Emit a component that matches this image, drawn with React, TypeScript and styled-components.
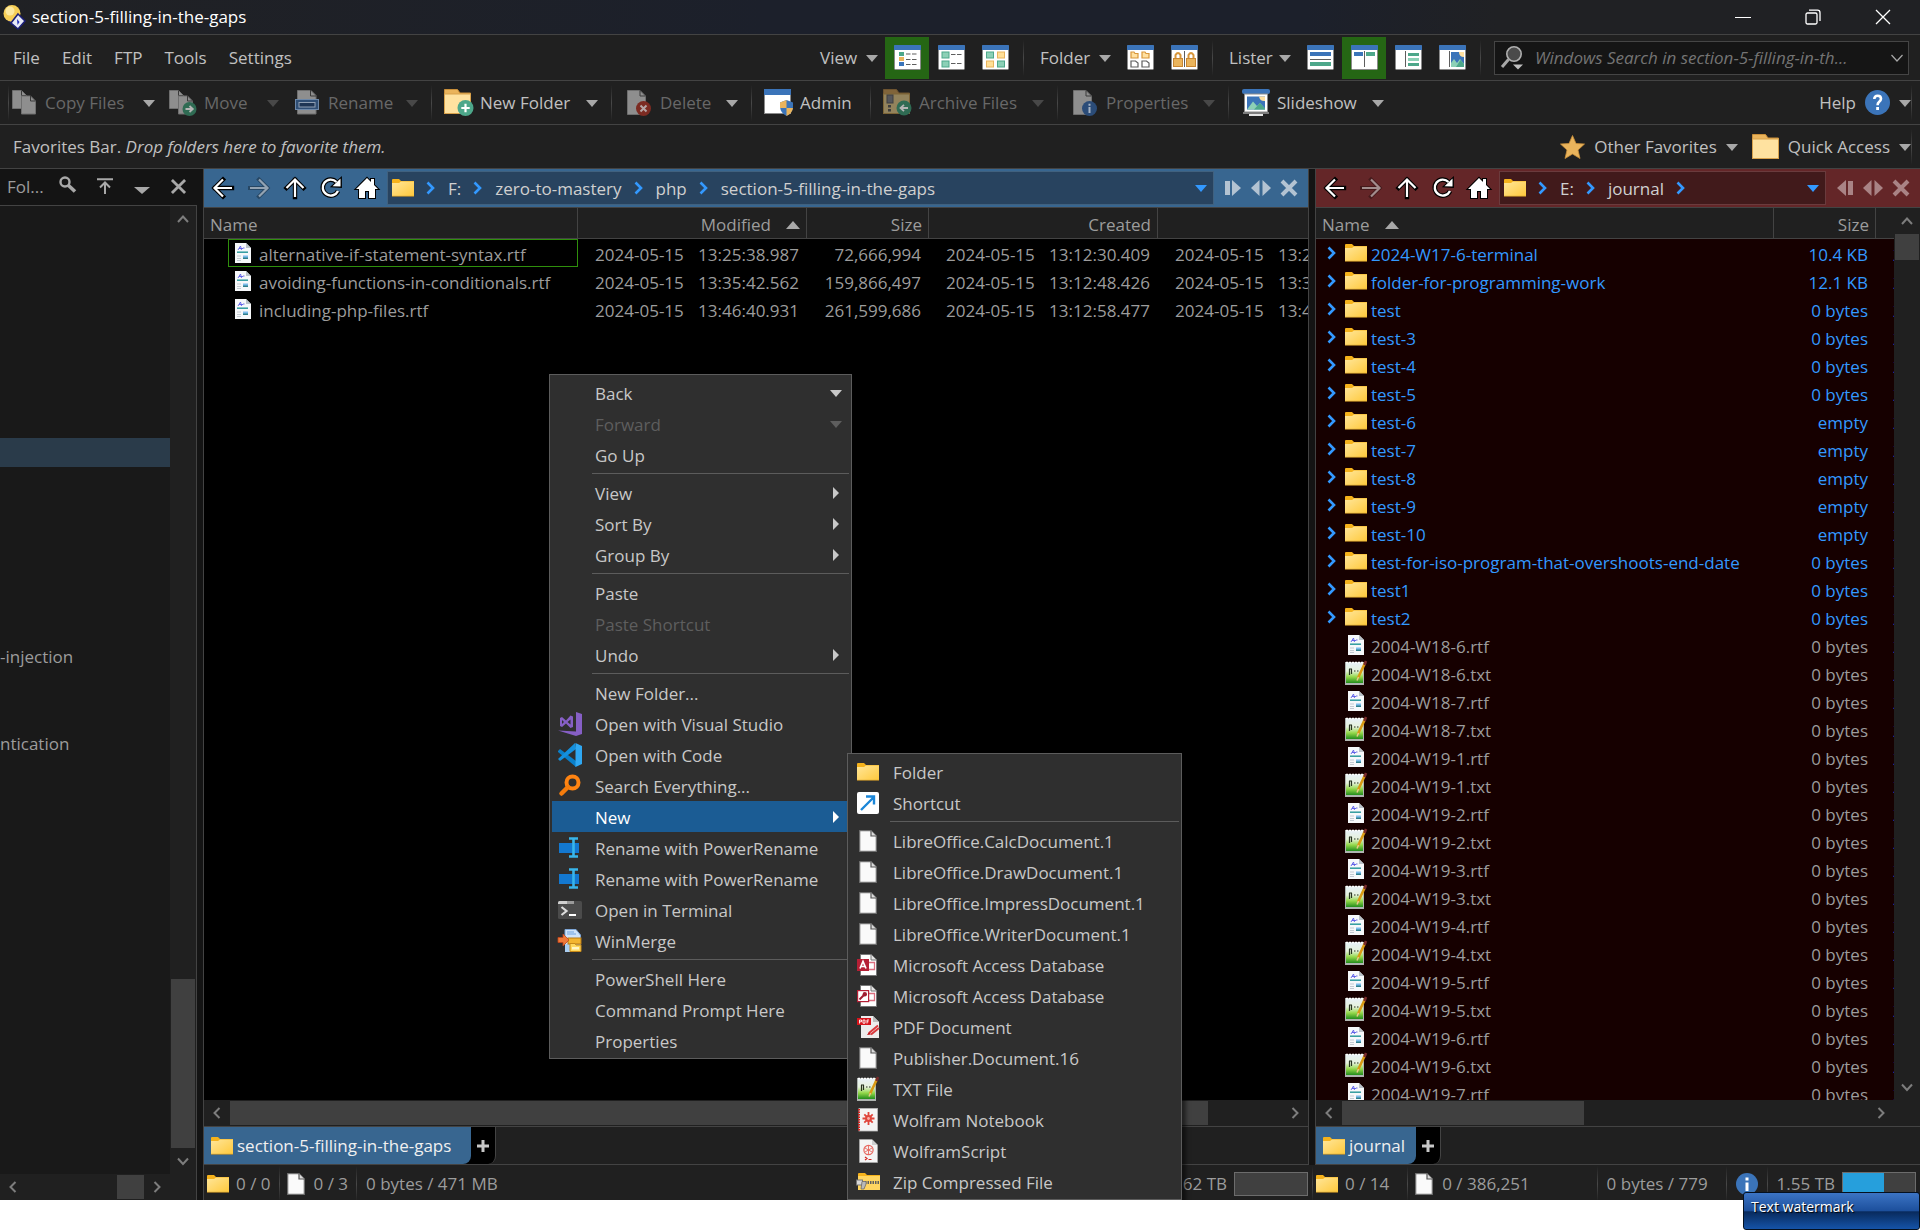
import React from "react";
import styled, { createGlobalStyle, css } from "styled-components";

/* ---------- theme values ---------- */

const c = {
  bar: "#202020",
  dark: "#141414",
  line: "#434343",
  text: "#c0c0c0",
  dim: "#9c9c9c",
  off: "#686868",
  thumb: "#404040",
  link: "#3399ff",
  green: "#256614",
  menu: "#2f2f2f",
};

const GlobalStyle = createGlobalStyle`
  *, *::before, *::after { box-sizing: border-box; }
  body {
    margin: 0;
    background: #ffffff;
    font-family: "Open Sans", "Noto Sans", "Liberation Sans", sans-serif;
    font-size: 17px;
    line-height: 24px;
    color: ${c.text};
  }
  button, input { font: inherit; color: inherit; background: none; border: 0; padding: 0; margin: 0; }
  button { display: inline-flex; align-items: center; white-space: nowrap; }
  svg { display: block; flex: none; overflow: visible; }
`;

/* ---------- drawings ---------- */

const Tri = ({ dir = "down", color = "#a8a8a8", w = 12 }: { dir?: "down" | "up" | "right"; color?: string; w?: number }) => {
  if (dir === "right")
    return (
      <svg width="12" height="12" viewBox="0 0 12 12">
        <path d="M3 0L9 6L3 12Z" fill={color} />
      </svg>
    );
  return (
    <svg width={w} height="8" viewBox="0 0 12 8" preserveAspectRatio="none">
      <path d={dir === "down" ? "M0 1H12L6 8Z" : "M0 8H12L6 0Z"} fill={color} />
    </svg>
  );
};

const Chevron = ({ dir, color = "#7d7d7d", s = 12 }: { dir: "up" | "down" | "left" | "right"; color?: string; s?: number }) => {
  const d = { up: "M1 9L6 3.500L11 9", down: "M1 3.500L6 9L11 3.500", left: "M8.500 1L3.500 6L8.500 11", right: "M3.500 1L8.500 6L3.500 11" }[dir];
  return (
    <svg width={s} height={s} viewBox="0 0 12 12">
      <path d={d} fill="none" stroke={color} strokeWidth="2" />
    </svg>
  );
};

const Crumb = () => (
  <svg width="10" height="12" viewBox="0 0 10 12">
    <path d="M1.500 0.500L7 6L1.500 11.500" fill="none" stroke={c.link} strokeWidth="2.600" />
  </svg>
);

const Folder = () => (
  <svg width="22" height="18" viewBox="0 0 22 18">
    <defs>
      <linearGradient id="folderFill" x1="0" y1="0" x2="1" y2="1">
        <stop offset="0" stopColor="#ffe69a" />
        <stop offset="1" stopColor="#ffc93c" />
      </linearGradient>
    </defs>
    <path d="M0 1Q0 0 1 0H7L9 2H22V6H0Z" fill="#f5b21b" />
    <path d="M0 4H7L9 2.500H22V17H0Z" fill="url(#folderFill)" />
    <path d="M0 17.300H22" stroke="#c9962a" strokeWidth="0.800" />
  </svg>
);

const BlankDoc = () => (
  <svg width="18" height="22" viewBox="0 0 18 22">
    <path d="M0.700 0.700H12L17.300 6V21.300H0.700Z" fill="#fafafa" stroke="#6f6f6f" strokeWidth="1.200" />
    <path d="M12 0.700V6H17.300" fill="#dcdcdc" stroke="#555" strokeWidth="1.200" />
  </svg>
);

const RtfDoc = () => (
  <svg width="16" height="20" viewBox="0 0 16 20">
    <path d="M0 0H11L16 5V20H0Z" fill="#f6f8fa" />
    <path d="M11 0V5H16Z" fill="#b9c1c8" />
    <path d="M3 7L5.500 3L6.500 7M4 5.500H8M8 5H9.500" stroke="#5a5ae6" strokeWidth="0.900" fill="none" />
    <path d="M2 9.200H13" stroke="#2f9a9d" strokeWidth="1.500" />
    <path d="M2 13H6M2 15.500H6M2 17.500H6" stroke="#c3cad2" strokeWidth="1.200" />
    <rect x="8" y="12.500" width="5" height="2.500" fill="#7cbcec" />
    <rect x="8" y="14.500" width="5" height="1.500" fill="#2e7f8b" />
  </svg>
);

const TxtDoc = () => (
  <svg width="22" height="24" viewBox="0 0 22 24">
    <defs>
      <linearGradient id="txtFill" x1="0" y1="0" x2="0" y2="1">
        <stop offset="0" stopColor="#e8f1f6" />
        <stop offset="0.400" stopColor="#e6f2dc" />
        <stop offset="0.700" stopColor="#93d84a" />
        <stop offset="1" stopColor="#228c1c" />
      </linearGradient>
    </defs>
    <rect x="0" y="1" width="19" height="23" fill="#aeb4b0" />
    <rect x="1" y="2" width="17" height="20" fill="url(#txtFill)" />
    <path d="M1 1.500H18" stroke="#fff" strokeWidth="1.500" strokeDasharray="2 1" />
    <path d="M4.500 8V14M6.500 8V13M4 8H7M9 10H10.500M12 10H13.500" stroke="#27331f" strokeWidth="1.200" />
    <path d="M20 2L13 17" stroke="#d99a14" strokeWidth="2.600" />
    <path d="M21 0L19.500 4" stroke="#7a2c2c" strokeWidth="2.600" />
    <path d="M13.500 16L12 19.500" stroke="#e8c98a" strokeWidth="1.500" />
  </svg>
);

const AppLogo = () => (
  <svg width="22" height="24" viewBox="0 0 22 24">
    <circle cx="9" cy="8.500" r="8.500" fill="#f7cf57" />
    <circle cx="7" cy="6" r="4.500" fill="#fde9a0" />
    <path d="M3 14Q7 19 12 16L9 20Z" fill="#1b1f6e" />
    <path d="M15 9L22 16L15 24L8 18Z" fill="#e8eaf6" stroke="#1c1f78" strokeWidth="1.500" />
    <path d="M14 14L16.500 17L14.500 20Z" fill="#2330b8" />
  </svg>
);

/* Window glyph shared by the view, folder and lister buttons */
const Win = ({ children }: { children: React.ReactNode }) => (
  <svg width="27" height="25" viewBox="0 0 27 25">
    <rect x="0.500" y="0.500" width="26" height="24" rx="1" fill="#fff" stroke="#8b8b8b" />
    <path d="M0 1Q0 0 1 0H26Q27 0 27 1V5H0Z" fill="#3b74b9" />
    {children}
  </svg>
);

const dash = (y: number, x = 12) => <path d={`M${x} ${y}H${x + 4.500}M${x + 6} ${y}H${x + 10.500}`} stroke="#5e5e5e" strokeWidth="1.200" />;

const IconDetails = () => (
  <Win>
    <rect x="5" y="7" width="5" height="4" fill="#4da78a" />
    <rect x="5" y="12" width="5" height="4" fill="#eab45c" />
    <rect x="5" y="17" width="5" height="4" fill="#3b74b9" />
    {dash(9)}{dash(14.500)}{dash(19.500)}
  </Win>
);
const IconTiles = () => (
  <Win>
    <rect x="4" y="7" width="7" height="6" fill="#8cd0b6" stroke="#4da78a" />
    <rect x="4" y="16" width="7" height="6" fill="#8cd0b6" stroke="#4da78a" />
    {dash(9.500, 13)}{dash(18.500, 13)}
  </Win>
);
const IconThumbs = () => (
  <Win>
    <rect x="4.500" y="7" width="7" height="6" fill="#8cd0b6" stroke="#4da78a" />
    <rect x="15.500" y="7" width="7" height="6" fill="#ffdf97" stroke="#eab45c" />
    <rect x="4.500" y="16" width="7" height="6" fill="#ffdf97" stroke="#eab45c" />
    <rect x="15.500" y="16" width="7" height="6" fill="#8cd0b6" stroke="#4da78a" />
  </Win>
);
const IconFolderOpts = () => (
  <Win>
    <path d="M4 7H7L8 8.500H11V13H4ZM15 7H18L19 8.500H22V13H15Z" fill="#ffe0a0" stroke="#d8963a" strokeWidth="1.200" />
    <path d="M4 16H8.500L11 18V22H4ZM15 16H19.500L22 18V22H15Z" fill="#fff" stroke="#5e5e5e" strokeWidth="1.200" />
  </Win>
);
const IconLocks = () => (
  <Win>
    <path d="M4.500 14V10Q7 6 9.500 10V14M17.500 14V10Q20 6 22.500 10V14" fill="none" stroke="#d8963a" strokeWidth="2" />
    <rect x="2.500" y="13.500" width="9" height="8" fill="#eab45c" stroke="#c98631" />
    <rect x="15.500" y="13.500" width="9" height="8" fill="#eab45c" stroke="#c98631" />
    <path d="M13.500 6V22" stroke="#5e5e5e" />
  </Win>
);
const IconHoriz = () => (
  <Win>
    <rect x="3" y="7" width="21" height="4" fill="#3b74b9" />
    <path d="M3 14.500H24" stroke="#5e5e5e" />
    <rect x="3" y="17" width="21" height="4" fill="#4da78a" />
  </Win>
);
const IconVert = () => (
  <Win>
    <rect x="3" y="7" width="9" height="4" fill="#3b74b9" />
    <rect x="15" y="7" width="9" height="4" fill="#4da78a" />
    <path d="M13.500 6V22" stroke="#5e5e5e" />
  </Win>
);
const IconTreeSide = () => (
  <Win>
    <path d="M10.500 6V22" stroke="#5e5e5e" />
    <rect x="13" y="8" width="11" height="3" fill="#4da78a" />
    <rect x="13" y="13" width="11" height="3" fill="#8cd0b6" />
    <rect x="13" y="18" width="11" height="3" fill="#4da78a" />
  </Win>
);
const IconViewer = () => (
  <Win>
    <path d="M10.500 6V22" stroke="#5e5e5e" />
    <rect x="12" y="7" width="13" height="15" fill="#3b74b9" />
    <path d="M20 7H25V12Q20 12 20 7Z" fill="#ffe0a0" />
    <path d="M12 22V18L15 14L18 18L21 14L25 19V22Z" fill="#8cd0b6" />
    <path d="M17 22L21.500 15L25 19V22Z" fill="#4da78a" />
  </Win>
);

const page = (x: number, y: number) => (
  <g>
    <path d={`M${x} ${y}h9l5 5v13h-14Z`} fill="#8e8e8e" stroke="#6f6f6f" />
    <path d={`M${x + 9} ${y}v5h5`} fill="none" stroke="#3a3a3a" />
  </g>
);
const IconCopy = () => (
  <svg width="24" height="25" viewBox="0 0 24 25">{page(0.500, 0.500)}{page(9.500, 6)}</svg>
);
const IconMove = () => (
  <svg width="28" height="26" viewBox="0 0 28 26">
    {page(0.500, 0.500)}{page(9.500, 6)}
    <circle cx="20.500" cy="19" r="7" fill="#2f6b53" />
    <path d="M16.500 19H23.500M20.500 16L23.800 19L20.500 22" stroke="#b5b5b5" strokeWidth="1.800" fill="none" />
  </svg>
);
const IconRename = () => (
  <svg width="24" height="25" viewBox="0 0 24 25">
    <path d="M2.500 0.500H16L21 5.500V24H2.500Z" fill="#8e8e8e" stroke="#6f6f6f" />
    <path d="M15.500 0V6H21" fill="none" stroke="#3a3a3a" />
    <rect x="0.500" y="9.500" width="23" height="10" fill="#2f4e74" stroke="#6c87a8" />
    <rect x="4" y="12.500" width="16" height="4.500" fill="#1e3554" stroke="#8f9fb3" />
  </svg>
);
const IconNewFolder = () => (
  <svg width="30" height="27" viewBox="0 0 30 27">
    <path d="M0.500 5V0.500H13.500L16 4H26.500V24.500H0.500Z" fill="#eab45c" stroke="#c98f3a" />
    <rect x="0.500" y="5" width="26" height="19.500" fill="#ffe2a0" stroke="#d8a24c" />
    <circle cx="21.500" cy="19" r="8" fill="#4da78a" />
    <path d="M21.500 14.800V23.200M17.300 19H25.700" stroke="#fff" strokeWidth="2.200" />
  </svg>
);
const IconDelete = () => (
  <svg width="24" height="26" viewBox="0 0 24 26">
    <path d="M0.500 0.500H13L18.500 6V24.500H0.500Z" fill="#8e8e8e" stroke="#6f6f6f" />
    <path d="M13 0.500V6H18.500" fill="none" stroke="#3a3a3a" />
    <circle cx="16.500" cy="18.500" r="7.500" fill="#7c2b22" />
    <path d="M13.500 15.500L19.500 21.500M19.500 15.500L13.500 21.500" stroke="#b5a5a5" strokeWidth="2" />
  </svg>
);
const IconAdmin = () => (
  <svg width="30" height="27" viewBox="0 0 30 27">
    <rect x="0.500" y="0.500" width="26" height="24" fill="#fff" stroke="#8b8b8b" />
    <rect width="27" height="6" fill="#3b74b9" />
    <path d="M22.500 11L29 13.500V18Q28.500 24 22.500 27Q16.500 24 16 18V13.500Z" fill="#3b74b9" />
    <path d="M22.500 11V19H16V13.500ZM22.500 19H29Q28.500 24 22.500 27Z" fill="#eab45c" />
  </svg>
);
const IconArchive = () => (
  <svg width="30" height="27" viewBox="0 0 30 27">
    <path d="M0.500 5V0.500H13.500L16 4H26.500V24.500H0.500Z" fill="#80643a" stroke="#6e5430" />
    <rect x="0.500" y="5" width="26" height="19.500" fill="#93835c" stroke="#7d6537" />
    <rect x="4" y="6" width="6" height="8" fill="#55565a" stroke="#3f3f40" />
    <path d="M6.500 16V24" stroke="#3e3e3e" strokeWidth="3" strokeDasharray="2.500 1.500" />
    <circle cx="21" cy="19" r="7.500" fill="#2f6b53" />
    <path d="M25 19H18M21 15.800L17.500 19L21 22.200" stroke="#b5b5b5" strokeWidth="1.800" fill="none" />
  </svg>
);
const IconProps = () => (
  <svg width="24" height="26" viewBox="0 0 24 26">
    <path d="M0.500 0.500H13L18.500 6V24.500H0.500Z" fill="#8e8e8e" stroke="#6f6f6f" />
    <path d="M13 0.500V6H18.500" fill="none" stroke="#3a3a3a" />
    <circle cx="16.500" cy="18.500" r="7.500" fill="#2b4c78" />
    <path d="M16.500 17V23M16.500 13.800V15.800" stroke="#a8b4c4" strokeWidth="2" />
  </svg>
);
const IconSlideshow = () => (
  <svg width="28" height="27" viewBox="0 0 28 27">
    <rect x="0" y="0" width="28" height="5" rx="2" fill="#3b74b9" />
    <rect x="2.500" y="5" width="23" height="18" fill="#fff" stroke="#8b8b8b" />
    <rect x="5" y="7.500" width="18" height="13" fill="#3b74b9" />
    <path d="M17 7.500H23V12Q18 12.500 17 7.500Z" fill="#ffe0a0" />
    <path d="M5 20.500L11 12.500L15 17L18 14L23 19.500V20.500Z" fill="#8cd0b6" />
    <path d="M12 20.500L18 14L23 19.500V20.500Z" fill="#4da78a" />
    <rect x="1" y="23" width="26" height="2" fill="#7d7d7d" />
    <rect x="7" y="25" width="14" height="2" fill="#e4e4e4" />
  </svg>
);
const IconHelp = () => (
  <svg width="25" height="25" viewBox="0 0 25 25">
    <circle cx="12.500" cy="12.500" r="12.500" fill="#3b74b9" />
    <path d="M9.300 9Q9.300 5.800 12.700 5.800Q16 5.800 16 8.800Q16 10.500 14 12Q12.600 13.200 12.600 15.200" fill="none" stroke="#fff" strokeWidth="2.600" />
    <rect x="11.200" y="17" width="2.800" height="3" fill="#fff" />
  </svg>
);
const IconStar = () => (
  <svg width="25" height="24" viewBox="0 0 25 24">
    <path d="M12.500 0.500L16 8.500L24.500 9L18 15L20 23.500L12.500 19L5 23.500L7 15L0.500 9L9 8.500Z" fill="#eab45c" stroke="#c98f3a" strokeWidth="0.800" />
  </svg>
);
const IconBigFolder = () => (
  <svg width="27" height="25" viewBox="0 0 27 25">
    <path d="M0.500 5V0.500H13.500L16 4H26.500V24.500H0.500Z" fill="#eab45c" stroke="#c98f3a" />
    <rect x="0.500" y="5" width="26" height="19.500" fill="#ffe2a0" stroke="#d8a24c" />
  </svg>
);
const IconSearch = () => (
  <svg width="23" height="24" viewBox="0 0 23 24">
    <path d="M1 21L7.500 13.500" stroke="#a8a8a8" strokeWidth="3" />
    <circle cx="13" cy="8" r="7.200" fill="#4a4a4a" stroke="#b0b0b0" strokeWidth="1.600" />
    <path d="M12 18.500H22L17 23.500Z" fill="#c0c0c0" />
  </svg>
);
const IconInfo = () => (
  <svg width="22" height="22" viewBox="0 0 22 22">
    <circle cx="11" cy="11" r="11" fill="#3b74b9" />
    <path d="M11 9.500V18" stroke="#fff" strokeWidth="3" />
    <rect x="9.500" y="4.500" width="3" height="3" fill="#fff" />
  </svg>
);

const Outlined = ({ d, faded }: { d: string; faded?: boolean }) => (
  <svg width="20" height="20" viewBox="0 0 20 20">
    {!faded && <path d={d} fill="none" stroke="#000" strokeWidth="4.400" strokeLinecap="square" />}
    {faded && <path d={d} fill="none" stroke="#000" strokeOpacity="0.300" strokeWidth="4" strokeLinecap="square" />}
    <path d={d} fill="none" stroke="#fff" strokeOpacity={faded ? 0.500 : 1} strokeWidth="2.200" />
  </svg>
);
const NavBack = () => <Outlined d="M19 10H2M10 1.500L1.500 10L10 18.500" />;
const NavForward = () => <Outlined faded d="M1 10H18M10 1.500L18.500 10L10 18.500" />;
const NavUp = () => <Outlined d="M10 19V2M1.500 10L10 1.500L18.500 10" />;
const NavReload = () => (
  <svg width="20" height="20" viewBox="0 0 20 20">
    <path d="M17 13A8 8 0 1 1 15.500 4" fill="none" stroke="#000" strokeWidth="4.600" />
    <path d="M11 8.500L20 0V9Z" fill="#fff" stroke="#000" strokeWidth="1.800" />
    <path d="M17 13A8 8 0 1 1 15.500 4" fill="none" stroke="#fff" strokeWidth="2.400" />
    <path d="M11.500 8.300L19.500 0.500V8.500Z" fill="#fff" />
  </svg>
);
const NavHome = () => (
  <svg width="22" height="20" viewBox="0 0 22 20">
    <path d="M11 0L15 4V1H18V7L22 11H19V20H13V13H9V20H3V11H0Z" fill="#fff" stroke="#000" strokeWidth="2" paintOrder="stroke" />
  </svg>
);

const SideToggle = ({ flip, color }: { flip?: boolean; color: string }) => (
  <svg width="16" height="16" viewBox="0 0 16 16">
    <g transform={flip ? "translate(16 0) scale(-1 1)" : undefined}>
      <rect x="0" y="1" width="5" height="14" fill={color} />
      <path d="M7 0L16 8L7 16Z" fill={color} />
    </g>
  </svg>
);
const SwapGlyph = ({ color }: { color: string }) => (
  <svg width="20" height="16" viewBox="0 0 20 16">
    <path d="M8.500 0V16L0 8ZM11.500 0V16L20 8Z" fill={color} />
  </svg>
);
const Cross = ({ color, w = 3, s = 16 }: { color: string; w?: number; s?: number }) => (
  <svg width={s} height={s} viewBox="0 0 16 16">
    <path d="M1 1L15 15M15 1L1 15" stroke={color} strokeWidth={w} />
  </svg>
);
const TreeSearch = () => (
  <svg width="18" height="18" viewBox="0 0 18 18">
    <circle cx="6" cy="6" r="4.500" fill="none" stroke="#a8a8a8" strokeWidth="2.400" />
    <path d="M9 9L16 15.500" stroke="#a8a8a8" strokeWidth="3.600" />
  </svg>
);
const TreeTop = () => (
  <svg width="16" height="16" viewBox="0 0 16 16">
    <path d="M0 1.200H16M8 16V5M3 9.500L8 4.500L13 9.500" fill="none" stroke="#a8a8a8" strokeWidth="2" />
  </svg>
);
const Plus = () => (
  <svg width="12" height="12" viewBox="0 0 12 12">
    <path d="M6 0V12M0 6H12" stroke="#c8c8c8" strokeWidth="3" />
  </svg>
);

/* Context menu artwork */
const MenuVS = () => (
  <svg width="24" height="24" viewBox="0 0 24 24">
    <path d="M18 0L24 2V22L18 24L0 18.500L18 19.500Z" fill="#865fc5" />
    <path d="M2 6L4 5L8 8.500L12.500 3.500L15 4.500V15L12.500 16L8 11.500L4 15L2 14ZM4 8V12L6 10ZM12.500 7.500L9.500 10L12.500 12.500Z" fill="#865fc5" fillRule="evenodd" />
  </svg>
);
const MenuCode = () => (
  <svg width="24" height="24" viewBox="0 0 24 24">
    <path d="M0 8L2 6L18 18V24L0 9Z" fill="#0a7fc9" />
    <path d="M0 16L17 0L18 6L2 18Z" fill="#1490dd" />
    <path d="M17.500 0L24 3V21L17.500 24Z" fill="#2fa8f2" />
  </svg>
);
const MenuEverything = () => (
  <svg width="24" height="24" viewBox="0 0 24 24">
    <circle cx="14.500" cy="8.500" r="6" fill="none" stroke="#ff8412" strokeWidth="4" />
    <path d="M10 13L3.500 19.500" stroke="#f57c0c" strokeWidth="4.500" strokeLinecap="round" />
  </svg>
);
const MenuPower = () => (
  <svg width="24" height="24" viewBox="0 0 24 24">
    <rect x="1" y="7" width="20" height="10" fill="#1378d0" />
    <path d="M11 2.500H20M11 20.500H20M15.500 2.500V20.500" stroke="#38b5ea" strokeWidth="2.600" />
  </svg>
);
const MenuTerminal = () => (
  <svg width="24" height="18" viewBox="0 0 24 18">
    <rect width="24" height="18" rx="1.500" fill="#4b4b4b" />
    <path d="M0 3V1.500Q0 0 1.500 0H9V3Z" fill="#cfcfcf" />
    <rect x="9" width="7" height="3" fill="#9a9a9a" />
    <path d="M3.500 6L8.500 10L3.500 14" fill="none" stroke="#ddd" strokeWidth="2.200" />
    <path d="M11 14H18" stroke="#fff" strokeWidth="2" />
  </svg>
);
const MenuWinMerge = () => (
  <svg width="24" height="24" viewBox="0 0 24 24">
    <path d="M7 0.500H18L22.500 6V16H7Z" fill="#cfe4fa" stroke="#7ea6d6" />
    <path d="M9 3H16M9 5H18M9 20H12" stroke="#6fa1dd" strokeWidth="1.200" />
    <rect x="7" y="15" width="7" height="8" fill="#a9cdf2" />
    <rect x="10" y="9" width="13" height="6" fill="#f3b530" stroke="#b87a14" />
    <path d="M12 14.500H17L18 16H23V22.500H12Z" fill="#ffd95e" stroke="#c98a18" />
    <rect x="14" y="18" width="7" height="2.500" fill="#fff6c8" />
    <path d="M0 8.500H5V5L11 11L5 17V13.500H0Z" fill="#ee7a3a" stroke="#c4441a" strokeWidth="0.800" />
  </svg>
);
const MenuShortcut = () => (
  <svg width="22" height="22" viewBox="0 0 22 22">
    <rect width="22" height="22" rx="2" fill="#fff" />
    <path d="M4 18L16.500 5.500M9 4.500H17V12.500" fill="none" stroke="#1b86d8" strokeWidth="2.400" />
  </svg>
);
const AccessPage = ({ children }: { children: React.ReactNode }) => (
  <svg width="22" height="22" viewBox="0 0 22 22">
    <path d="M3.500 0.500H14L19.500 6V21.500H3.500Z" fill="#fff" stroke="#777" />
    <path d="M14 0.500V6H19.500" fill="#e6e6e6" stroke="#777" />
    <path d="M12 8.500H17.500V15.500H12" fill="none" stroke="#dc6f80" strokeWidth="1.300" />
    {children}
  </svg>
);
const MenuAccessA = () => (
  <AccessPage>
    <rect x="0" y="5" width="12" height="12" fill="#b51f35" />
    <path d="M3 14.500L6 7.500L9 14.500M4 12.500H8" fill="none" stroke="#fff" strokeWidth="1.700" />
  </AccessPage>
);
const MenuAccessKey = () => (
  <AccessPage>
    <rect x="0.600" y="5.600" width="11" height="11" fill="#fff" stroke="#b51f35" strokeWidth="1.200" />
    <circle cx="7.800" cy="9.200" r="2.200" fill="#a01c30" />
    <path d="M7 10L2.500 14.500" stroke="#a01c30" strokeWidth="2" />
  </AccessPage>
);
const MenuPdf = () => (
  <svg width="22" height="22" viewBox="0 0 22 22">
    <path d="M4 0H16L22 6V22H4Z" fill="#ececec" />
    <path d="M16 0V6H22Z" fill="#bdbdbd" />
    <rect x="0" y="2" width="14" height="7" fill="#d8141c" />
    <path d="M2.500 7.500V4H4.500V5.800H2.500M6 7.200V4H8V7.200ZM10 7.500V4H12M10 5.800H11.500" fill="none" stroke="#fff" strokeWidth="0.900" />
    <path d="M21 9.500L12 17M22 12L14 18.500" stroke="#d8383c" strokeWidth="2" />
    <path d="M10 19L12 16L14 18.500Z" fill="#c01218" />
  </svg>
);
const MenuNotebook = () => (
  <svg width="22" height="24" viewBox="0 0 22 24">
    <rect x="2" y="0.500" width="18.500" height="22.500" fill="#f4f4f4" stroke="#bbb" strokeWidth="0.800" />
    <path d="M2 1V23" stroke="#d3231e" strokeWidth="2" strokeDasharray="1.500 1" />
    <path d="M11.500 4V17M5.500 10.500H17.500M7.300 6.300L15.700 14.700M15.700 6.300L7.300 14.700" stroke="#e0463c" strokeWidth="1.800" />
    <circle cx="11.500" cy="10.500" r="3.400" fill="#e0463c" />
    <circle cx="11.500" cy="10.500" r="1.400" fill="#f7b1ab" />
  </svg>
);
const MenuScript = () => (
  <svg width="22" height="24" viewBox="0 0 22 24">
    <path d="M2.500 0.500H15L20.500 6V23.500H2.500Z" fill="#f4f4f4" stroke="#aaa" strokeWidth="0.800" />
    <path d="M15 0.500V6H20.500Z" fill="#cfcfcf" />
    <circle cx="11.500" cy="11" r="4.600" fill="none" stroke="#e8665e" strokeWidth="1.200" />
    <path d="M8 9L15 13M11.500 6.500V15M15 9L8 13" stroke="#e8665e" strokeWidth="0.900" />
    <path d="M8 18L10 19.500L8 21M11.500 20.500H14.500" fill="none" stroke="#d3231e" strokeWidth="1.200" />
  </svg>
);
const MenuZip = () => (
  <svg width="24" height="18" viewBox="0 0 24 18">
    <path d="M2 1Q2 0 3 0H9L11 2H24V6H2Z" fill="#f5b21b" />
    <rect x="2" y="3" width="22" height="14" fill="#ffd560" />
    <path d="M9 9.500H24" stroke="#5f5f5f" strokeWidth="3" strokeDasharray="1.500 1" />
    <rect x="0.500" y="7" width="6" height="5" fill="#d8d8d8" stroke="#777" />
    <path d="M6 8.500H10V11L8 16H5Z" fill="#b9b9b9" stroke="#6a6a6a" strokeWidth="0.800" />
  </svg>
);

/* ---------- shell ---------- */

const Page = styled.div`
  position: relative;
  height: 100vh;
  min-height: 640px;
  padding-bottom: 30px;
  overflow: hidden;
`;
const Shell = styled.div`
  position: relative;
  height: 100%;
  display: flex;
  flex-direction: column;
  overflow: hidden;
  background: ${c.bar};
`;

const TitleBar = styled.header`
  display: flex;
  align-items: center;
  height: 35px;
  flex: none;
  padding: 0 2px 0 3px;
  border-bottom: 1px solid ${c.line};
  background: linear-gradient(90deg, #202124 0%, #1c202b 40%, #1c202b 68%, #202124 78%);
  color: #ffffff;
`;
const TitleText = styled.h1`
  flex: 1;
  margin: 0 0 0 7px;
  font-size: 17px;
  font-weight: 400;
`;
const Caption = styled.button`
  width: 70px;
  height: 34px;
  justify-content: center;
`;

const Bar = styled.div<{ $h: number }>`
  display: flex;
  align-items: center;
  flex: none;
  height: ${(p) => p.$h}px;
  border-bottom: 1px solid ${c.line};
`;
const MenuBar = styled(Bar)`
  padding: 0 11px 0 2px;
`;
const MenuWord = styled.button`
  height: 40px;
  padding: 0 11px;
`;
const Push = styled.div`
  margin-left: auto;
`;
const Drop = styled.button<{ $w: number }>`
  width: ${(p) => p.$w}px;
  height: 42px;
  justify-content: space-between;
  padding-right: 7px;
`;
const IconButton = styled.button<{ $on?: boolean }>`
  width: 44px;
  height: 42px;
  justify-content: center;
  background: ${(p) => (p.$on ? c.green : "transparent")};
`;
const Divider = styled.span<{ $l?: number; $r?: number }>`
  flex: none;
  width: 1px;
  height: 36px;
  margin: 0 ${(p) => p.$r ?? 0}px 0 ${(p) => p.$l ?? 0}px;
  background: linear-gradient(#202020, #484848 50%, #202020);
`;
const SearchBox = styled.label`
  display: flex;
  align-items: center;
  width: 415px;
  height: 34px;
  padding: 0 5px 0 6px;
  gap: 11px;
  border: 1px solid #454545;
  background: #151515;
`;
const SearchInput = styled.input`
  flex: 1;
  min-width: 0;
  outline: 0;
  font-style: italic;
  &::placeholder { color: #747474; opacity: 1; }
`;

const ToolItem = styled.button<{ $w: number; $off?: boolean }>`
  width: ${(p) => p.$w}px;
  height: 42px;
  padding-right: 13px;
  gap: 6px;
  color: ${(p) => (p.$off ? c.off : c.text)};
`;
const IconSlot = styled.span`
  display: flex;
  justify-content: center;
  width: 30px;
`;
const ToolText = styled.span`
  flex: 1;
  text-align: left;
`;
const SideTool = styled.button`
  gap: 9px;
  margin-left: 14px;
`;
const FavText = styled.p`
  margin: 0 auto 0 13px;
`;

/* ---------- body ---------- */

const Body = styled.main`
  flex: 1;
  min-height: 0;
  display: grid;
  grid-template-columns: 204px minmax(0, 1fr);
`;
const TreeSide = styled.aside`
  display: flex;
  min-height: 0;
  background: ${c.dark};
  border-right: 1px solid ${c.line};
  padding-right: 6px;
`;
const TreePanel = styled.div`
  flex: 1;
  min-width: 0;
  display: flex;
  flex-direction: column;
`;
const TreeHead = styled.div`
  display: flex;
  align-items: center;
  justify-content: space-between;
  height: 36px;
  flex: none;
  padding-left: 7px;
  color: ${c.dim};
`;
const TreeTool = styled.button`
  width: 37px;
  height: 34px;
  justify-content: center;
`;
const TreeArea = styled.div`
  flex: 1;
  min-height: 0;
  display: grid;
  grid-template: minmax(0, 1fr) 26px / minmax(0, 1fr) 26px;
  border-top: 1px solid ${c.line};
  border-right: 1px solid ${c.line};
  background: ${c.bar};
`;
const TreeList = styled.ul`
  margin: 0;
  padding: 0;
  list-style: none;
  overflow: hidden;
  background: #191919;
  color: ${c.dim};
`;
const TreeRow = styled.li<{ $on?: boolean }>`
  height: 29px;
  padding-top: 4px;
  background: ${(p) => (p.$on ? "#2a3b4a" : "transparent")};
`;

const Work = styled.div`
  display: flex;
  flex-direction: column;
  min-width: 0;
  min-height: 0;
`;
const Panes = styled.div`
  flex: 1;
  min-height: 0;
  display: grid;
  grid-template-columns: minmax(0, 1fr) 8px 604px;
`;
const Splitter = styled.div`
  background: ${c.dark};
  border: solid ${c.line};
  border-width: 0 1px;
`;
const Pane = styled.section`
  display: flex;
  flex-direction: column;
  min-height: 0;
  min-width: 0;
`;
const PathBar = styled.div<{ $bg: string }>`
  display: flex;
  align-items: center;
  flex: none;
  height: 39px;
  border-bottom: 1px solid ${c.line};
  padding: 0 11px 0 1px;
  background: ${(p) => p.$bg};
`;
const NavButton = styled.button`
  width: 36px;
  height: 34px;
  justify-content: center;
`;
const PathField = styled.div<{ $bg: string; $line: string }>`
  flex: 1;
  min-width: 0;
  display: flex;
  align-items: center;
  height: 34px;
  margin: 0 11px 0 2px;
  padding: 0 6px 0 4px;
  gap: 12px;
  background: ${(p) => p.$bg};
  border: 1px solid ${(p) => p.$line};
  color: #d0d0d0;
`;
const PathPart = styled.button`
  padding-top: 2px;
`;
const PathEnd = styled.button`
  margin-left: auto;
`;
const PaneTools = styled.div`
  display: flex;
  gap: 10px;
  align-items: center;
`;

const ListWrap = styled.div<{ $bg: string }>`
  flex: 1;
  min-height: 0;
  display: flex;
  background: ${(p) => p.$bg};
`;
const ListView = styled.div`
  flex: 1;
  min-width: 0;
  overflow: hidden;
`;
const Table = styled.table<{ $w: number }>`
  width: ${(p) => p.$w}px;
  table-layout: fixed;
  border-collapse: separate;
  border-spacing: 0;
  white-space: pre;
`;
const Th = styled.th<{ $right?: boolean }>`
  height: 31px;
  padding: 3px 6px 0;
  font-weight: 400;
  color: ${c.dim};
  background: ${c.bar};
  text-align: ${(p) => (p.$right ? "right" : "left")};
  border-right: 1px solid ${c.line};
  border-bottom: 1px solid ${c.line};
`;
const HeadSort = styled.span<{ $right?: boolean }>`
  display: flex;
  align-items: center;
  justify-content: ${(p) => (p.$right ? "flex-end" : "flex-start")};
  gap: 15px;
`;
const Td = styled.td<{ $link?: boolean }>`
  height: 28px;
  padding: 4px 8px 0 0;
  text-align: right;
  color: ${(p) => (p.$link ? c.link : c.dim)};
`;
const Day = styled.span`
  display: inline-block;
  width: 103px;
  text-align: left;
`;
const NameTd = styled.td<{ $indent: number; $link?: boolean }>`
  height: 28px;
  padding: 0 0 0 ${(p) => p.$indent}px;
  color: ${(p) => (p.$link ? c.link : c.dim)};
`;
const NameBox = styled.span<{ $focus?: boolean; $gap: number }>`
  display: flex;
  align-items: center;
  height: 28px;
  gap: ${(p) => p.$gap}px;
  padding-left: 6px;
  border: 1px solid ${(p) => (p.$focus ? "#2f8f0c" : "transparent")};
`;
const Label = styled.span`
  padding-top: 4px;
`;
const Twisty = styled.span`
  width: 14px;
`;
const FileIcon = styled.span<{ $w: number }>`
  display: flex;
  justify-content: center;
  width: ${(p) => p.$w}px;
`;

const HBar = styled.div`
  display: flex;
  align-items: center;
  height: 26px;
  background: ${c.bar};
`;
const VBar = styled.div`
  display: flex;
  flex-direction: column;
  align-items: center;
  width: 26px;
  flex: none;
  background: ${c.bar};
`;
const Arrow = styled.button`
  flex: none;
  width: 26px;
  height: 26px;
  justify-content: center;
`;
const Track = styled.div<{ $v?: boolean; $end?: boolean }>`
  flex: 1;
  align-self: stretch;
  display: flex;
  min-width: 0;
  min-height: 0;
  padding: 1px;
  ${(p) => (p.$v ? css`flex-direction: column; padding-top: 0; padding-bottom: 0;` : css`padding-left: 0; padding-right: 0;`)}
  justify-content: ${(p) => (p.$end ? "flex-end" : "flex-start")};
`;
const Thumb = styled.div<{ $size: string }>`
  flex: 0 0 ${(p) => p.$size};
  background: ${c.thumb};
`;

const TabStrip = styled.div`
  display: flex;
  height: 39px;
  flex: none;
  border-top: 1px solid ${c.line};
  border-bottom: 1px solid ${c.line};
`;
const TabBack = styled.div`
  display: flex;
  background: #000;
  border-right: 1px solid ${c.line};
  border-radius: 0 0 8px 0;
`;
const Tab = styled.button<{ $w: number }>`
  min-width: ${(p) => p.$w}px;
  gap: 4px;
  padding: 0 11px 0 7px;
  background: #386690;
  color: #f0f0f0;
  border-radius: 0 0 8px 0;
`;
const NewTab = styled.button`
  width: 24px;
  justify-content: center;
`;

const StatusBar = styled.footer`
  display: flex;
  align-items: center;
  height: 35px;
  flex: none;
  padding-top: 2px;
  color: ${c.dim};
`;
const StatusHalf = styled.div<{ $w?: number }>`
  display: flex;
  align-items: center;
  height: 100%;
  ${(p) => (p.$w ? css`flex: none; width: ${p.$w}px;` : css`flex: 1; min-width: 0;`)}
`;
const Cell = styled.span<{ $l?: number; $gap?: number; $r?: number }>`
  display: flex;
  align-items: center;
  gap: ${(p) => p.$gap ?? 7}px;
  padding-left: ${(p) => p.$l ?? 7}px;
  padding-right: ${(p) => p.$r ?? 8}px;
  white-space: nowrap;
`;
const Meter = styled.span<{ $fill: number }>`
  flex: none;
  width: 74px;
  height: 24px;
  border: 1px solid #6c6c6c;
  background: linear-gradient(90deg, #269fdc ${(p) => p.$fill}%, #404040 ${(p) => p.$fill}%);
`;

/* ---------- overlays ---------- */

const Menu = styled.ul<{ $x: number; $y: number; $w: number }>`
  position: absolute;
  left: ${(p) => p.$x}px;
  top: ${(p) => p.$y}px;
  width: ${(p) => p.$w}px;
  margin: 0;
  padding: 2px;
  list-style: none;
  background: ${c.menu};
  border: 1px solid #5c5c5c;
  box-shadow: 4px 4px 4px rgba(0, 0, 0, 0.5);
`;
const MenuItem = styled.button<{ $on?: boolean }>`
  display: flex;
  width: 100%;
  height: 31px;
  padding-right: 7px;
  background: ${(p) => (p.$on ? "#1b5c94" : "transparent")};
  color: ${(p) => (p.$on ? "#fff" : "#c8c8c8")};
  &:disabled { color: #5e5e5e; }
`;
const MenuIcon = styled.span`
  display: flex;
  justify-content: center;
  width: 43px;
  padding-right: 7px;
`;
const MenuLabel = styled.span`
  flex: 1;
  padding-top: 3px;
  text-align: left;
`;
const MenuRule = styled.li`
  height: 1px;
  margin: 3px 0 3px 40px;
  background: #5c5c5c;
`;
const Tip = styled.div`
  position: absolute;
  right: 0;
  bottom: 0;
  width: 177px;
  height: 38px;
  padding: 4px 7px;
  border: 1px solid #04101f;
  border-radius: 3px;
  background: linear-gradient(#3c74c4 0%, #1c4f9c 50%, #082a5c 52%, #1553a8 100%);
  color: #fff;
  font-size: 14px;
  line-height: 20px;
  text-shadow: 1px 1px 1px #000;
`;

/* ---------- data ---------- */

const leftFiles = [
  ["alternative-if-statement-syntax.rtf", "2024-05-15  13:25:38.987", "72,666,994", "2024-05-15  13:12:30.409", "2024-05-15  13:25:38.987"],
  ["avoiding-functions-in-conditionals.rtf", "2024-05-15  13:35:42.562", "159,866,497", "2024-05-15  13:12:48.426", "2024-05-15  13:35:42.562"],
  ["including-php-files.rtf", "2024-05-15  13:46:40.931", "261,599,686", "2024-05-15  13:12:58.477", "2024-05-15  13:46:40.931"],
];

const folders: [string, string][] = [
  ["2024-W17-6-terminal", "10.4 KB"],
  ["folder-for-programming-work", "12.1 KB"],
  ["test", "0 bytes"],
  ["test-3", "0 bytes"],
  ["test-4", "0 bytes"],
  ["test-5", "0 bytes"],
  ["test-6", "empty"],
  ["test-7", "empty"],
  ["test-8", "empty"],
  ["test-9", "empty"],
  ["test-10", "empty"],
  ["test-for-iso-program-that-overshoots-end-date", "0 bytes"],
  ["test1", "0 bytes"],
  ["test2", "0 bytes"],
];

const journalFiles = [
  "2004-W18-6.rtf", "2004-W18-6.txt", "2004-W18-7.rtf", "2004-W18-7.txt",
  "2004-W19-1.rtf", "2004-W19-1.txt", "2004-W19-2.rtf", "2004-W19-2.txt",
  "2004-W19-3.rtf", "2004-W19-3.txt", "2004-W19-4.rtf", "2004-W19-4.txt",
  "2004-W19-5.rtf", "2004-W19-5.txt", "2004-W19-6.rtf", "2004-W19-6.txt",
  "2004-W19-7.rtf",
];

type Entry = { label: string; icon?: React.ReactNode; sub?: "right" | "down"; off?: boolean; on?: boolean } | null;

const mainMenu: Entry[] = [
  { label: "Back", sub: "down" },
  { label: "Forward", sub: "down", off: true },
  { label: "Go Up" },
  null,
  { label: "View", sub: "right" },
  { label: "Sort By", sub: "right" },
  { label: "Group By", sub: "right" },
  null,
  { label: "Paste" },
  { label: "Paste Shortcut", off: true },
  { label: "Undo", sub: "right" },
  null,
  { label: "New Folder..." },
  { label: "Open with Visual Studio", icon: <MenuVS /> },
  { label: "Open with Code", icon: <MenuCode /> },
  { label: "Search Everything...", icon: <MenuEverything /> },
  { label: "New", sub: "right", on: true },
  { label: "Rename with PowerRename", icon: <MenuPower /> },
  { label: "Rename with PowerRename", icon: <MenuPower /> },
  { label: "Open in Terminal", icon: <MenuTerminal /> },
  { label: "WinMerge", icon: <MenuWinMerge /> },
  null,
  { label: "PowerShell Here" },
  { label: "Command Prompt Here" },
  { label: "Properties" },
];

const newMenu: Entry[] = [
  { label: "Folder", icon: <Folder /> },
  { label: "Shortcut", icon: <MenuShortcut /> },
  null,
  { label: "LibreOffice.CalcDocument.1", icon: <BlankDoc /> },
  { label: "LibreOffice.DrawDocument.1", icon: <BlankDoc /> },
  { label: "LibreOffice.ImpressDocument.1", icon: <BlankDoc /> },
  { label: "LibreOffice.WriterDocument.1", icon: <BlankDoc /> },
  { label: "Microsoft Access Database", icon: <MenuAccessA /> },
  { label: "Microsoft Access Database", icon: <MenuAccessKey /> },
  { label: "PDF Document", icon: <MenuPdf /> },
  { label: "Publisher.Document.16", icon: <BlankDoc /> },
  { label: "TXT File", icon: <TxtDoc /> },
  { label: "Wolfram Notebook", icon: <MenuNotebook /> },
  { label: "WolframScript", icon: <MenuScript /> },
  { label: "Zip Compressed File", icon: <MenuZip /> },
];

const treeRows = Array.from({ length: 19 }, (_, i) => ({ 15: "-injection", 18: "ntication" } as Record<number, string>)[i] ?? "");

/* ---------- composed parts ---------- */

const Tool = ({ icon, text, w, off, arrow }: { icon: React.ReactNode; text: string; w: number; off?: boolean; arrow?: "on" | "off" }) => (
  <ToolItem $w={w} $off={off}>
    <IconSlot>{icon}</IconSlot>
    <ToolText>{text}</ToolText>
    {arrow && <Tri color={arrow === "on" ? "#a8a8a8" : "#484848"} />}
  </ToolItem>
);

const HScroll = ({ size, end, tail }: { size: string; end?: boolean; tail?: boolean }) => (
  <HBar>
    <Arrow aria-label="Scroll left"><Chevron dir="left" /></Arrow>
    <Track $end={end}><Thumb $size={size} /></Track>
    <Arrow aria-label="Scroll right"><Chevron dir="right" /></Arrow>
    {tail && <Arrow as="span" />}
  </HBar>
);

const VScroll = ({ size, end }: { size: string; end?: boolean }) => (
  <VBar>
    <Arrow aria-label="Scroll up"><Chevron dir="up" /></Arrow>
    <Track $v $end={end}><Thumb $size={size} /></Track>
    <Arrow aria-label="Scroll down"><Chevron dir="down" /></Arrow>
  </VBar>
);

/* Timestamps keep the day in a fixed column so the times line up */
const Value = ({ text }: { text: string }) => {
  const [day, time] = text.split("  ");
  return time ? <><Day>{day}</Day>{time}</> : <>{text}</>;
};

const NavButtons = () => (
  <>
    <NavButton aria-label="Back"><NavBack /></NavButton>
    <NavButton aria-label="Forward"><NavForward /></NavButton>
    <NavButton aria-label="Up"><NavUp /></NavButton>
    <NavButton aria-label="Refresh"><NavReload /></NavButton>
    <NavButton aria-label="Home"><NavHome /></NavButton>
  </>
);

const Path = ({ parts, open, bg, line }: { parts: string[]; open?: boolean; bg: string; line: string }) => (
  <PathField $bg={bg} $line={line}>
    <Folder />
    {parts.map((p) => (
      <React.Fragment key={p}>
        <Crumb />
        <PathPart>{p}</PathPart>
      </React.Fragment>
    ))}
    {open && <Crumb />}
    <PathEnd aria-label="Path history"><Tri color={c.link} /></PathEnd>
  </PathField>
);

const PopupMenu = ({ items, x, y, w }: { items: Entry[]; x: number; y: number; w: number }) => (
  <Menu $x={x} $y={y} $w={w}>
    {items.map((it, i) =>
      it === null ? (
        <MenuRule key={i} />
      ) : (
        <li key={i}>
          <MenuItem $on={it.on} disabled={it.off}>
            <MenuIcon>{it.icon}</MenuIcon>
            <MenuLabel>{it.label}</MenuLabel>
            {it.sub && <Tri dir={it.sub} color={it.off ? "#5e5e5e" : it.on ? "#fff" : "#c8c8c8"} />}
          </MenuItem>
        </li>
      )
    )}
  </Menu>
);

const Tabs = ({ name, w }: { name: string; w: number }) => (
  <TabStrip>
    <TabBack>
      <Tab $w={w}><Folder />{name}</Tab>
      <NewTab aria-label="New tab"><Plus /></NewTab>
    </TabBack>
  </TabStrip>
);

const LeftPane = () => (
  <Pane>
    <PathBar $bg="#386690">
      <NavButtons />
      <Path parts={["F:", "zero-to-mastery", "php", "section-5-filling-in-the-gaps"]} bg="#28435f" line="#40617f" />
      <PaneTools>
        <button aria-label="Single pane"><SideToggle color="#b3c3d2" /></button>
        <button aria-label="Swap panes"><SwapGlyph color="#b3c3d2" /></button>
        <button aria-label="Close pane"><Cross color="#b3c3d2" w={4} /></button>
      </PaneTools>
    </PathBar>
    <ListWrap $bg="#000000">
      <ListView>
        <Table $w={1183}>
          <colgroup>
            <col style={{ width: 374 }} /><col style={{ width: 229 }} /><col style={{ width: 122 }} />
            <col style={{ width: 229 }} /><col style={{ width: 229 }} />
          </colgroup>
          <thead>
            <tr>
              <Th>Name</Th>
              <Th $right><HeadSort $right>Modified<Tri dir="up" w={14} /></HeadSort></Th>
              <Th $right>Size</Th>
              <Th $right>Created</Th>
              <Th />
            </tr>
          </thead>
          <tbody>
            {leftFiles.map(([name, ...rest], i) => (
              <tr key={name}>
                <NameTd $indent={24}>
                  <NameBox $focus={i === 0} $gap={8}><RtfDoc /><Label>{name}</Label></NameBox>
                </NameTd>
                {rest.map((v, k) => <Td key={k}><Value text={v} /></Td>)}
              </tr>
            ))}
          </tbody>
        </Table>
      </ListView>
    </ListWrap>
    <HScroll size="93%" />
    <Tabs name="section-5-filling-in-the-gaps" w={267} />
  </Pane>
);

const RightPane = () => (
  <Pane>
    <PathBar $bg="#642628">
      <NavButtons />
      <Path parts={["E:", "journal"]} open bg="#411a1b" line="#6a3b3d" />
      <PaneTools>
        <button aria-label="Single pane"><SideToggle flip color="#a98385" /></button>
        <button aria-label="Swap panes"><SwapGlyph color="#a98385" /></button>
        <button aria-label="Close pane"><Cross color="#a98385" w={4} /></button>
      </PaneTools>
    </PathBar>
    <ListWrap $bg="#160000">
      <ListView>
        <Table $w={789}>
          <colgroup>
            <col style={{ width: 458 }} /><col style={{ width: 102 }} /><col style={{ width: 229 }} />
          </colgroup>
          <thead>
            <tr>
              <Th><HeadSort>Name<Tri dir="up" w={14} /></HeadSort></Th>
              <Th $right>Size</Th>
              <Th />
            </tr>
          </thead>
          <tbody>
            {folders.map(([name, size]) => (
              <tr key={name}>
                <NameTd $indent={4} $link>
                  <NameBox $gap={4}><Twisty><Crumb /></Twisty><Folder /><Label>{name}</Label></NameBox>
                </NameTd>
                <Td $link>{size}</Td>
                <Td $link><Value text="2024-05-15  13:12:30.409" /></Td>
              </tr>
            ))}
            {journalFiles.map((name) => (
              <tr key={name}>
                <NameTd $indent={4}>
                  <NameBox $gap={4}>
                    <Twisty />
                    <FileIcon $w={22}>{name.endsWith("rtf") ? <RtfDoc /> : <TxtDoc />}</FileIcon>
                    <Label>{name}</Label>
                  </NameBox>
                </NameTd>
                <Td>0 bytes</Td>
                <Td $link><Value text="2024-05-15  13:12:30.409" /></Td>
              </tr>
            ))}
          </tbody>
        </Table>
      </ListView>
      <VScroll size="26px" />
    </ListWrap>
    <HScroll size="46%" tail />
    <Tabs name="journal" w={99} />
  </Pane>
);

export default function App() {
  return (
    <Page>
      <GlobalStyle />
      <Shell>
        <TitleBar>
          <AppLogo />
          <TitleText>section-5-filling-in-the-gaps</TitleText>
          <Caption aria-label="Minimize">
            <svg width="16" height="16" viewBox="0 0 16 16"><path d="M0 8.500H16" stroke="#fff" /></svg>
          </Caption>
          <Caption aria-label="Restore">
            <svg width="16" height="16" viewBox="0 0 16 16" fill="none" stroke="#fff" strokeWidth="1.300">
              <rect x="1" y="4" width="11" height="11" rx="1.500" />
              <path d="M4 1.200H12.500Q15 1.200 15 3.700V12" />
            </svg>
          </Caption>
          <Caption aria-label="Close"><Cross color="#fff" w={1.3} /></Caption>
        </TitleBar>

        <MenuBar $h={46}>
          {["File", "Edit", "FTP", "Tools", "Settings"].map((m) => <MenuWord key={m}>{m}</MenuWord>)}
          <Push />
          <Drop $w={65}>View<Tri /></Drop>
          <IconButton $on aria-label="Details"><IconDetails /></IconButton>
          <IconButton aria-label="Tiles"><IconTiles /></IconButton>
          <IconButton aria-label="Thumbnails"><IconThumbs /></IconButton>
          <Divider $l={6} $r={16} />
          <Drop $w={78}>Folder<Tri /></Drop>
          <IconButton aria-label="Folder options"><IconFolderOpts /></IconButton>
          <IconButton aria-label="Format lock"><IconLocks /></IconButton>
          <Divider $l={6} $r={16} />
          <Drop $w={69}>Lister<Tri /></Drop>
          <IconButton aria-label="Dual horizontal"><IconHoriz /></IconButton>
          <IconButton $on aria-label="Dual vertical"><IconVert /></IconButton>
          <IconButton aria-label="Folder tree"><IconTreeSide /></IconButton>
          <IconButton aria-label="Viewer"><IconViewer /></IconButton>
          <Divider $l={6} $r={13} />
          <SearchBox>
            <IconSearch />
            <SearchInput aria-label="Windows Search" placeholder="Windows Search in section-5-filling-in-th..." />
            <svg width="12" height="8" viewBox="0 0 12 8"><path d="M0.500 1L6 7L11.500 1" fill="none" stroke="#a8a8a8" strokeWidth="1.200" /></svg>
          </SearchBox>
        </MenuBar>

        <Bar $h={44}>
          <Divider $l={8} />
          <Tool icon={<IconCopy />} text="Copy Files" w={159} off arrow="on" />
          <Tool icon={<IconMove />} text="Move" w={124} off arrow="off" />
          <Tool icon={<IconRename />} text="Rename" w={139} off arrow="off" />
          <Divider $r={12} />
          <Tool icon={<IconNewFolder />} text="New Folder" w={167} arrow="on" />
          <Divider $r={12} />
          <Tool icon={<IconDelete />} text="Delete" w={127} off arrow="on" />
          <Divider $r={12} />
          <Tool icon={<IconAdmin />} text="Admin" w={106} />
          <Divider $r={12} />
          <Tool icon={<IconArchive />} text="Archive Files" w={174} off arrow="off" />
          <Divider $r={12} />
          <Tool icon={<IconProps />} text="Properties" w={158} off arrow="off" />
          <Divider $r={12} />
          <Tool icon={<IconSlideshow />} text="Slideshow" w={156} arrow="on" />
          <Push />
          <SideTool>Help<IconHelp /><Tri /></SideTool>
          <Divider $r={8} />
        </Bar>

        <Bar $h={44}>
          <FavText>Favorites Bar. <em>Drop folders here to favorite them.</em></FavText>
          <SideTool><IconStar />Other Favorites<Tri /></SideTool>
          <SideTool><IconBigFolder />Quick Access<Tri /></SideTool>
          <Divider $r={8} />
        </Bar>

        <Body>
          <TreeSide>
            <TreePanel>
              <TreeHead>
                Fol...
                <div>
                  <TreeTool aria-label="Find folder"><TreeSearch /></TreeTool>
                  <TreeTool aria-label="Go to top"><TreeTop /></TreeTool>
                  <TreeTool aria-label="Tree menu"><Tri w={16} /></TreeTool>
                  <TreeTool aria-label="Close tree"><Cross color="#a8a8a8" s={15} /></TreeTool>
                </div>
              </TreeHead>
              <TreeArea>
                <TreeList>
                  {treeRows.map((t, i) => <TreeRow key={i} $on={i === 8}>{t}</TreeRow>)}
                </TreeList>
                <VScroll size="169px" end />
                <HScroll size="27px" end />
              </TreeArea>
            </TreePanel>
          </TreeSide>
          <Work>
            <Panes>
              <LeftPane />
              <Splitter />
              <RightPane />
            </Panes>
            <StatusBar>
              <StatusHalf>
                <Cell $l={3}><Folder />0 / 0</Cell>
                <Divider />
                <Cell $gap={9}><BlankDoc />0 / 3</Cell>
                <Divider />
                <Cell $l={9}>0 bytes / 471 MB</Cell>
                <Push />
                <Cell $r={0}>1.62 TB<Meter $fill={0} /></Cell>
              </StatusHalf>
              <StatusHalf $w={612}>
                <Divider $l={4} />
                <Cell $l={3} $r={18}><Folder />0 / 14</Cell>
                <Divider />
                <Cell $gap={9}><BlankDoc />0 / 386,251</Cell>
                <Push />
                <Divider />
                <Cell $l={9} $r={18}>0 bytes / 779</Cell>
                <Divider />
                <Cell $l={9} $r={9}><IconInfo /></Cell>
                <Divider />
                <Cell $l={9} $r={4}>1.55 TB<Meter $fill={57} /></Cell>
              </StatusHalf>
            </StatusBar>
          </Work>
        </Body>

        <PopupMenu items={mainMenu} x={549} y={374} w={303} />
        <PopupMenu items={newMenu} x={847} y={753} w={335} />
      </Shell>
      <Tip role="tooltip">Text watermark</Tip>
    </Page>
  );
}
